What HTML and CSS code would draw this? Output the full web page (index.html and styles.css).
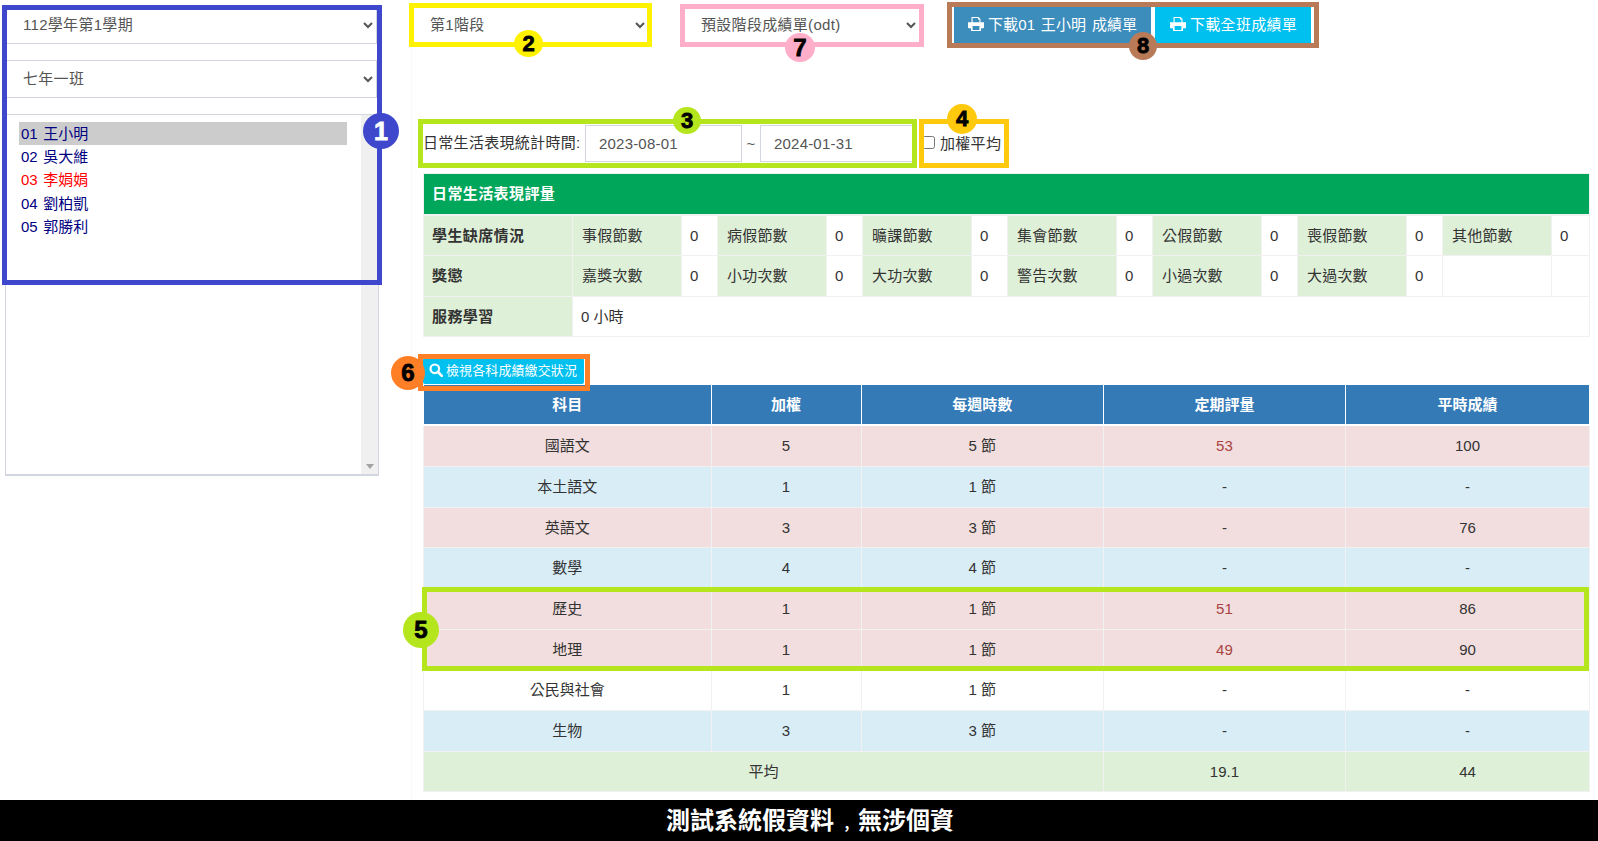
FILE: index.html
```html
<!DOCTYPE html>
<html lang="zh-Hant">
<head>
<meta charset="utf-8">
<title>階段成績單</title>
<link rel="stylesheet" href="styles.css">
</head>
<body>
<div class="page">
  <div class="main">
    <div class="side">
      <select class="field side-field"><option>112學年第1學期</option></select>
      <select class="field side-field"><option>七年一班</option></select>
      <div class="student-box">
        <ul class="student-list">
          <li class="active">01 王小明</li>
          <li>02 吳大維</li>
          <li class="warn">03 李娟娟</li>
          <li>04 劉柏凱</li>
          <li>05 郭勝利</li>
        </ul>
        <div class="scroll-track"><span class="scroll-down"></span></div>
      </div>
    </div>

    <div class="content">
      <div class="toolbar">
        <select class="field stage"><option>第1階段</option></select>
        <select class="field stage"><option>預設階段成績單(odt)</option></select>
        <div class="downloads">
          <button class="btn btn-primary">
            <svg class="icon" viewBox="0 0 16 14"><path fill-rule="evenodd" d="M3.500 0h7L12.500 2v3.200H16V10.500q0 .8-.8.8H13V14H3v-2.700H.8q-.8 0-.8-.8V5.200h3.500zM4.600 1.100v4.100h6.800V2.600H10V1.100zM4.600 9v3.900h6.800V9z"/></svg>
            下載01 王小明 成績單
          </button>
          <button class="btn btn-info">
            <svg class="icon" viewBox="0 0 16 14"><path fill-rule="evenodd" d="M3.500 0h7L12.500 2v3.200H16V10.500q0 .8-.8.8H13V14H3v-2.700H.8q-.8 0-.8-.8V5.200h3.500zM4.600 1.100v4.100h6.800V2.600H10V1.100zM4.600 9v3.900h6.800V9z"/></svg>
            下載全班成績單
          </button>
        </div>
      </div>

      <div class="date-row">
        <label class="date-label">日常生活表現統計時間:</label>
        <input class="date-input" type="text" value="2023-08-01">
        <span class="tilde">~</span>
        <input class="date-input" type="text" value="2024-01-31">
        <label class="weighted"><input type="checkbox"> 加權平均</label>
      </div>

      <table class="grid life-table">
        <colgroup>
          <col class="c-head">
          <col class="c-label"><col class="c-val">
          <col class="c-label"><col class="c-val">
          <col class="c-label"><col class="c-val">
          <col class="c-label"><col class="c-val">
          <col class="c-label"><col class="c-val">
          <col class="c-label"><col class="c-val">
          <col class="c-label"><col class="c-val-last">
        </colgroup>
        <thead>
          <tr><th class="title" colspan="15">日常生活表現評量</th></tr>
        </thead>
        <tbody>
          <tr>
            <td class="ok strong">學生缺席情況</td>
            <td class="ok">事假節數</td><td>0</td>
            <td class="ok">病假節數</td><td>0</td>
            <td class="ok">曠課節數</td><td>0</td>
            <td class="ok">集會節數</td><td>0</td>
            <td class="ok">公假節數</td><td>0</td>
            <td class="ok">喪假節數</td><td>0</td>
            <td class="ok">其他節數</td><td>0</td>
          </tr>
          <tr>
            <td class="ok strong">獎懲</td>
            <td class="ok">嘉獎次數</td><td>0</td>
            <td class="ok">小功次數</td><td>0</td>
            <td class="ok">大功次數</td><td>0</td>
            <td class="ok">警告次數</td><td>0</td>
            <td class="ok">小過次數</td><td>0</td>
            <td class="ok">大過次數</td><td>0</td>
            <td></td><td></td>
          </tr>
          <tr>
            <td class="ok strong">服務學習</td>
            <td colspan="14">0 小時</td>
          </tr>
        </tbody>
      </table>

      <button class="btn-check">
        <svg class="icon-search" viewBox="0 0 14 14"><circle cx="5.800" cy="5.800" r="4.300" fill="none" stroke="#fff" stroke-width="2.200"/><path d="M9 9l3.800 3.800" stroke="#fff" stroke-width="2.600" stroke-linecap="round"/></svg>
        檢視各科成績繳交狀況
      </button>

      <table class="grid score-table">
        <colgroup>
          <col class="c-subject"><col class="c-weight"><col class="c-num"><col class="c-num"><col class="c-num-last">
        </colgroup>
        <thead>
          <tr><th>科目</th><th>加權</th><th>每週時數</th><th>定期評量</th><th>平時成績</th></tr>
        </thead>
        <tbody>
          <tr class="danger"><td>國語文</td><td>5</td><td>5 節</td><td class="fail">53</td><td>100</td></tr>
          <tr class="info"><td>本土語文</td><td>1</td><td>1 節</td><td>-</td><td>-</td></tr>
          <tr class="danger"><td>英語文</td><td>3</td><td>3 節</td><td>-</td><td>76</td></tr>
          <tr class="info"><td>數學</td><td>4</td><td>4 節</td><td>-</td><td>-</td></tr>
          <tr class="danger"><td>歷史</td><td>1</td><td>1 節</td><td class="fail">51</td><td>86</td></tr>
          <tr class="danger"><td>地理</td><td>1</td><td>1 節</td><td class="fail">49</td><td>90</td></tr>
          <tr><td>公民與社會</td><td>1</td><td>1 節</td><td>-</td><td>-</td></tr>
          <tr class="info"><td>生物</td><td>3</td><td>3 節</td><td>-</td><td>-</td></tr>
          <tr class="success"><td colspan="3">平均</td><td>19.1</td><td>44</td></tr>
        </tbody>
      </table>
    </div>
  </div>

  <div class="notice">測試系統假資料<span class="comma">，</span>無涉個資</div>

  <!-- 說明用的標註框 -->
  <div class="mark mark-1"></div>
  <div class="mark mark-2"></div>
  <div class="mark mark-3"></div>
  <div class="mark mark-4"></div>
  <div class="mark mark-5"></div>
  <div class="mark mark-6"></div>
  <div class="mark mark-7"></div>
  <div class="mark mark-8"></div>
  <div class="badge badge-1">1</div>
  <div class="badge badge-2">2</div>
  <div class="badge badge-3">3</div>
  <div class="badge badge-4">4</div>
  <div class="badge badge-5">5</div>
  <div class="badge badge-6">6</div>
  <div class="badge badge-7">7</div>
  <div class="badge badge-8">8</div>
</div>
</body>
</html>
```

FILE: styles.css
```css
* {
    box-sizing: border-box;
}
body {
    margin: 0;
    font-family: "Liberation Sans", "Noto Sans CJK TC", sans-serif;
    font-size: 15px;
    color: #333;
    background: #fff;
}
.page {
    position: relative;
    width: 1598px;
    height: 841px;
    overflow: hidden;
}
.main {
    display: flex;
    height: 800px;
}

/* 左欄 */
.side {
    width: 374px;
    margin-left: 5px;
    padding-top: 6px;
    display: flex;
    flex-direction: column;
    gap: 16px;
}
.field {
    height: 38px;
    padding: 0 12px 2px;
    border: 1px solid #d2d6de;
    background-color: #fff;
    color: #555;
    font-family: inherit;
    font-size: 15px;
    letter-spacing: 0.3px;
}
.side-field {
    width: 372px;
    padding-left: 13px;
}
.student-box {
    display: flex;
    height: 362px;
    border: 2px solid #d2d6de;
    border-top-width: 1px;
    border-right-width: 1px;
    border-left-width: 1px;
}
.student-list {
    flex: 1;
    list-style: none;
    margin: 0;
    padding: 7px 14px 7px 13px;
    color: #000080;
}
.student-list li {
    height: 23.200px;
    line-height: 24px;
    padding-left: 2px;
    word-spacing: 1.500px;
}
.student-list .active {
    background: #ccc;
}
.student-list .warn {
    color: #f00;
}
.scroll-track {
    width: 17px;
    background: #f0f0f0;
    display: flex;
    align-items: flex-end;
    justify-content: center;
    padding-bottom: 5px;
}
.scroll-down {
    border: 4px solid transparent;
    border-top: 5px solid #a3a3a3;
    border-bottom: 0;
}

/* 右欄 */
.content {
    width: 1187px;
    margin-left: 32px;
    padding: 6px 10px 0 11px;
    border-left: 1px solid #fafafa;
}
.toolbar {
    display: flex;
    align-items: center;
    margin-left: -10px;
}
.stage {
    width: 236px;
    margin-right: 35px;
}
.downloads {
    display: flex;
    gap: 4px;
    margin-left: -1px;
}
.btn {
    height: 36px;
    padding: 0 13px 3px 14px;
    border: 0;
    color: #fff;
    font-family: inherit;
    font-size: 15px;
    letter-spacing: 0.1px;
    display: flex;
    align-items: center;
    gap: 4px;
    white-space: nowrap;
}
.btn-primary {
    width: 197px;
    background: #3c8dbc;
    word-spacing: 1.500px;
}
.btn-info {
    width: 156px;
    padding-left: 15px;
    background: #00c0ef;
    letter-spacing: 0.3px;
}
.icon {
    width: 16px;
    height: 14px;
    fill: #fff;
    flex: none;
}

.date-row {
    display: flex;
    align-items: center;
    margin: 81px 0 11px 0;
}
.date-label {
    width: 162px;
    padding-bottom: 5px;
    letter-spacing: 0.3px;
}
.date-input {
    width: 157px;
    height: 37px;
    padding: 0 13px;
    border: 1px solid #d2d6de;
    color: #555;
    font-family: inherit;
    font-size: 15px;
    letter-spacing: 0.2px;
}
.tilde {
    width: 18px;
    text-align: center;
    color: #555;
}
.weighted {
    margin-left: 5px;
    padding-bottom: 3px;
    display: flex;
    align-items: center;
    gap: 5px;
    letter-spacing: 0.3px;
}
.weighted input {
    margin: 0;
}

/* 表格 */
.grid {
    width: 1166px;
    table-layout: fixed;
    border-collapse: collapse;
}
.grid th,
.grid td {
    border: 1px solid #f1f1f1;
    padding: 9px;
    line-height: 21.4px;
    font-weight: normal;
}
.grid th {
    border-bottom-width: 2px;
    font-weight: bold;
    color: #fff;
}
.c-head { width: 149px; }
.c-label { width: 109px; }
.c-val { width: 36px; }
.c-val-last { width: 38px; }
.c-subject { width: 287.500px; }
.c-weight { width: 150px; }
.c-num { width: 242.300px; }
.c-num-last { width: 243.900px; }

.life-table th.title {
    padding: 9px 8px 9.500px;
    background: #00a65a;
    text-align: left;
    letter-spacing: 0.4px;
}
.life-table td {
    padding-left: 8px;
}
.life-table td.ok {
    padding-left: 9px;
    letter-spacing: 0.2px;
}
.ok {
    background: #dff0d8;
}
.life-table td.strong {
    padding-left: 8px;
    font-weight: bold;
    letter-spacing: 0.4px;
}

.btn-check {
    display: flex;
    align-items: center;
    gap: 3px;
    width: 161px;
    height: 26px;
    margin-top: 20.500px;
    padding: 0 6px 2px;
    border: 0;
    border-radius: 2px;
    background: #00c0ef;
    color: #fff;
    font-family: inherit;
    font-size: 13px;
    letter-spacing: 0.1px;
    white-space: nowrap;
}
.icon-search {
    width: 14px;
    height: 14px;
    flex: none;
}

.score-table th {
    background: #337ab7;
    text-align: center;
    border-color: #fff;
    padding: 9.200px 8px;
}
.score-table td {
    text-align: center;
    height: 40.700px;
}
.danger td { background: #f2dede; }
.info td { background: #d9edf7; }
.success td { background: #dff0d8; }
.fail { color: #a94442; }

.notice {
    height: 41px;
    line-height: 41px;
    padding-left: 22px;
    background: #000;
    color: #fff;
    font-size: 24px;
    font-weight: bold;
    text-align: center;
}
.comma {
    display: inline-block;
    transform: translate(1px, 8px) scale(0.6);
}

/* 標註 */
.mark {
    position: absolute;
    border: 5px solid;
}
.mark-1 { left: 2px; top: 5px; width: 380px; height: 280px; border-color: #3f48cc; }
.mark-2 { left: 409px; top: 3px; width: 243px; height: 44px; border-color: #fff200; }
.mark-3 { left: 418px; top: 119px; width: 499px; height: 49px; border-color: #b5e61d; }
.mark-4 { left: 919px; top: 119px; width: 90px; height: 49px; border-color: #ffc90e; }
.mark-5 { left: 422px; top: 587px; width: 1167px; height: 84px; border-color: #b5e61d; }
.mark-6 { left: 418px; top: 354px; width: 172px; height: 37px; border-color: #ff7f27; }
.mark-7 { left: 680px; top: 4px; width: 244px; height: 43px; border-color: #ffaec9; }
.mark-8 { left: 947px; top: 2px; width: 372px; height: 46px; border-color: #b97a57; }

.badge {
    position: absolute;
    display: flex;
    align-items: center;
    justify-content: center;
    border-radius: 50%;
    font-weight: bold;
    color: #000;
    -webkit-text-stroke: 0.8px currentColor;
}
.badge-1 { left: 363px; top: 113px; width: 36px; height: 36px; background: #3f48cc; color: #fff; font-size: 25px; }
.badge-2 { left: 514px; top: 30px; width: 29px; height: 27px; background: #fff200; font-size: 22px; }
.badge-3 { left: 673px; top: 107px; width: 28px; height: 27px; background: #b5e61d; font-size: 22px; }
.badge-4 { left: 947px; top: 104px; width: 30px; height: 30px; background: #ffc90e; font-size: 22px; }
.badge-5 { left: 403px; top: 612px; width: 36px; height: 36px; background: #b5e61d; font-size: 24px; }
.badge-6 { left: 391px; top: 356px; width: 34px; height: 34px; background: #ff7f27; font-size: 24px; }
.badge-7 { left: 785px; top: 33px; width: 30px; height: 29px; background: #ffaec9; font-size: 24px; }
.badge-8 { left: 1129px; top: 32px; width: 28px; height: 28px; background: #b97a57; font-size: 22px; }
```
